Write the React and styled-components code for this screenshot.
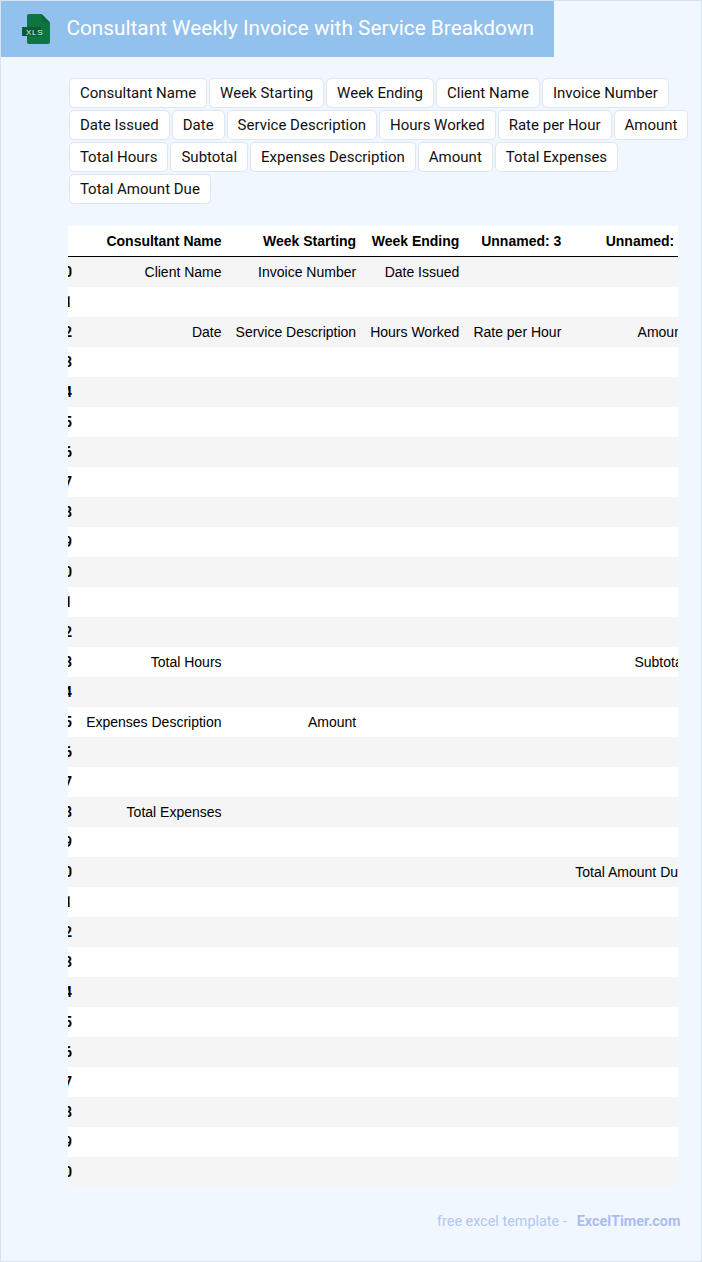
import React from "react";
import styled, { createGlobalStyle } from "styled-components";

const Global = createGlobalStyle`
  html, body { margin: 0; padding: 0; }
  body { background: #f0f7ff; font-family: Roboto, "Liberation Sans", sans-serif; }
`;

const Page = styled.div`
  box-sizing: border-box;
  width: 702px;
  height: 1262px;
  border: 1px solid #d8e3f0;
  background: #f0f7ff;
  display: flex;
  flex-direction: column;
  overflow: hidden;
`;

const Banner = styled.header`
  box-sizing: border-box;
  width: 553px;
  height: 56px;
  background: #93c1ee;
  display: flex;
  align-items: center;
  gap: 14.4px;
  padding: 0 0 2px 21px;
`;

const Title = styled.h1`
  margin: 0;
  font-size: 20.8px;
  font-weight: 400;
  color: #fff;
  white-space: nowrap;
`;

const Tags = styled.div`
  display: flex;
  flex-wrap: wrap;
  gap: 2px;
  margin: 21px 0 0 67.89px;
  width: 625px;
`;

const Tag = styled.span`
  box-sizing: border-box;
  height: 30px;
  line-height: 28px;
  padding: 0 10px;
  background: #fff;
  border: 1px solid #dde6f2;
  border-radius: 5px;
  font-size: 15px;
  color: #111;
  white-space: nowrap;
`;

const TableClip = styled.div`
  margin: 22px 0 0 67px;
  width: 610px;
  overflow: hidden;
`;

const Table = styled.table`
  border-collapse: separate;
  border-spacing: 0;
  margin-left: -18.95px;
  font-family: "Liberation Sans", Arial, sans-serif;
  font-size: 14px;
  color: #000;
  white-space: nowrap;
  background: #fff;
`;

const HeadCell = styled.th`
  height: 31px;
  box-sizing: border-box;
  padding: 0 7px;
  text-align: right;
  font-weight: 700;
  border-bottom: 1px solid #000;
`;

const Row = styled.tr`
  background: ${(p) => (p.$odd ? "#fff" : "#f5f5f5")};
`;

const Cell = styled.td`
  height: 30px;
  box-sizing: border-box;
  padding: 0 7px;
  text-align: right;
`;

const IndexCell = styled(Cell)`
  font-family: Roboto, sans-serif;
  font-weight: 700;
`;

const Footer = styled.footer`
  margin: 26px 0 0 436px;
  display: flex;
  gap: 10px;
  font-size: 14.4px;
  color: #b4c6f2;
  white-space: nowrap;
`;

const FooterBrand = styled.span`
  font-weight: 700;
  color: #a9bdf0;
`;

const FileIcon = () => (
  <svg width="30" height="30" viewBox="0 0 30 30" style={{ flex: "none", marginTop: "2px" }}>
    <path d="M7 0h12.5L28 8.5V28a2 2 0 0 1-2 2H7a2 2 0 0 1-2-2V2a2 2 0 0 1 2-2z" fill="#0e7541" />
    <path d="M19.5 0L28 8.5h-6.5a2 2 0 0 1-2-2z" fill="#0b6a3a" />
    <rect x="0" y="13" width="19" height="9" fill="#0a5c34" />
    <text x="4" y="20.6" fontFamily="'Liberation Sans', sans-serif" fontSize="8" fill="#e6f4ea" letterSpacing="0.7">XLS</text>
  </svg>
);

const tags = [
  "Consultant Name", "Week Starting", "Week Ending", "Client Name", "Invoice Number",
  "Date Issued", "Date", "Service Description", "Hours Worked", "Rate per Hour", "Amount",
  "Total Hours", "Subtotal", "Expenses Description", "Amount", "Total Expenses",
  "Total Amount Due",
];

const head = ["", "Consultant Name", "Week Starting", "Week Ending", "Unnamed: 3", "Unnamed: 4"];

const content = {
  0: ["Client Name", "Invoice Number", "Date Issued", "", ""],
  2: ["Date", "Service Description", "Hours Worked", "Rate per Hour", "Amount"],
  13: ["Total Hours", "", "", "", "Subtotal"],
  15: ["Expenses Description", "Amount", "", "", ""],
  18: ["Total Expenses", "", "", "", ""],
  20: ["", "", "", "", "Total Amount Due"],
};

const rows = Array.from({ length: 31 }, (_, i) => i);

export default function App() {
  return (
    <Page>
      <Global />
      <Banner>
        <FileIcon />
        <Title>Consultant Weekly Invoice with Service Breakdown</Title>
      </Banner>
      <Tags>
        {tags.map((t, i) => (
          <Tag key={i}>{t}</Tag>
        ))}
      </Tags>
      <TableClip>
        <Table>
          <thead>
            <tr>
              {head.map((h, i) => (
                <HeadCell key={i}>{h}</HeadCell>
              ))}
            </tr>
          </thead>
          <tbody>
            {rows.map((i) => (
              <Row key={i} $odd={i % 2 === 1}>
                <IndexCell>{i}</IndexCell>
                {(content[i] || ["", "", "", "", ""]).map((c, j) => (
                  <Cell key={j}>{c}</Cell>
                ))}
              </Row>
            ))}
          </tbody>
        </Table>
      </TableClip>
      <Footer>
        <span>free excel template -</span>
        <FooterBrand>ExcelTimer.com</FooterBrand>
      </Footer>
    </Page>
  );
}
